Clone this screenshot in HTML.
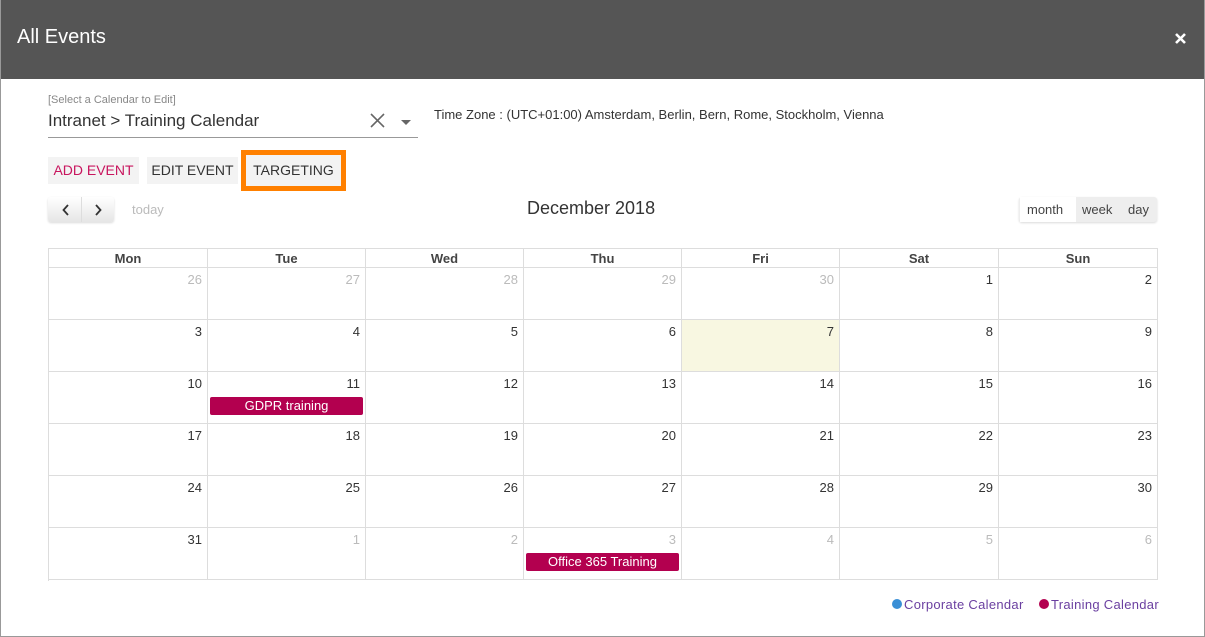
<!DOCTYPE html>
<html><head><style>
*{box-sizing:border-box;margin:0;padding:0}
body{width:1205px;height:637px;background:#fff;font-family:"Liberation Sans",sans-serif;position:relative;overflow:hidden;color:#333}
.frame{position:absolute;left:0;top:0;width:1205px;height:637px;border:1px solid #999;border-top:none}
.hdr{position:absolute;left:0;top:0;width:1205px;height:79px;background:#555}
.hdr .t{position:absolute;left:17px;top:26px;color:#fff;font-size:20px}
.a{position:absolute;white-space:nowrap}
.btn{position:absolute;top:157px;height:27px;background:#f3f3f3;font-size:14px;line-height:27px;text-align:center}
.cell{position:absolute;border-right:1px solid #ddd;border-bottom:1px solid #ddd;font-size:13px;text-align:right;padding:4px 5px 0 0;color:#333}
.dh{position:absolute;top:248px;height:20px;border-right:1px solid #ddd;border-top:1px solid #ddd;border-bottom:1px solid #ddd;font-size:13px;font-weight:bold;text-align:center;line-height:19px;color:#444}
.ev{position:absolute;height:18px;background:#b3004f;color:#fff;font-size:13px;text-align:center;line-height:18px;border-radius:2px}
</style></head><body>
<div class="hdr"><div class="t">All Events</div>
<svg class="a" style="left:1174px;top:32px" width="13" height="13" viewBox="0 0 13 13"><path d="M2 2L11 11M11 2L2 11" stroke="#fff" stroke-width="2.6"/></svg></div>
<div class="frame"></div>
<div class="a" style="left:48px;top:94px;font-size:11px;color:#888">[Select a Calendar to Edit]</div>
<div class="a" style="left:48px;top:111px;font-size:17px;color:#333">Intranet &gt; Training Calendar</div>
<svg class="a" style="left:370px;top:113px" width="15" height="15" viewBox="0 0 15 15"><path d="M1 1L14 14M14 1L1 14" stroke="#666" stroke-width="1.6"/></svg>
<div class="a" style="left:401px;top:120px;width:0;height:0;border-left:5px solid transparent;border-right:5px solid transparent;border-top:5px solid #666"></div>
<div class="a" style="left:48px;top:137px;width:370px;height:1px;background:#999"></div>
<div class="a" style="left:434px;top:107px;font-size:13px;color:#333">Time Zone : (UTC+01:00) Amsterdam, Berlin, Bern, Rome, Stockholm, Vienna</div>
<div class="btn" style="left:48px;width:91px;color:#c8155e">ADD EVENT</div>
<div class="btn" style="left:147px;width:91px">EDIT EVENT</div>
<div class="btn" style="left:241px;top:150px;width:105px;height:41px;border:5px solid #ff8000;background:#f3f3f3;line-height:31px">TARGETING</div>
<div class="a" style="left:48px;top:197px;width:66px;height:25px;background:linear-gradient(#fff,#e6e6e6);border-radius:3px;box-shadow:0 1px 2px rgba(0,0,0,.15)"></div>
<div class="a" style="left:81px;top:197px;width:1px;height:25px;background:#ddd"></div>
<svg class="a" style="left:62px;top:204px" width="8" height="12" viewBox="0 0 8 12"><path d="M6 1L1.5 6L6 11" fill="none" stroke="#333" stroke-width="1.8"/></svg>
<svg class="a" style="left:94px;top:204px" width="8" height="12" viewBox="0 0 8 12"><path d="M2 1L6.5 6L2 11" fill="none" stroke="#333" stroke-width="1.8"/></svg>
<div class="a" style="left:132px;top:202px;font-size:13px;color:#bbb">today</div>
<div class="a" style="left:527px;top:198px;font-size:18px;color:#333">December 2018</div>
<div class="a" style="left:1019px;top:197px;width:138px;height:25px;background:#eee;border-radius:3px;box-shadow:0 1px 2px rgba(0,0,0,.15)"></div>
<div class="a" style="left:1020px;top:197px;width:56px;height:25px;background:#fff"></div>
<div class="a" style="left:1027px;top:202px;font-size:13px;color:#444">month</div>
<div class="a" style="left:1082px;top:202px;font-size:13px;color:#444">week</div>
<div class="a" style="left:1128px;top:202px;font-size:13px;color:#444">day</div>
<div class="a" style="left:48px;top:248px;width:1px;height:333px;background:#ddd"></div>
<div id="g"></div>
<script>
var xs=[48,207,365,523,681,839,998,1157],days=["Mon","Tue","Wed","Thu","Fri","Sat","Sun"],h="";
for(var i=0;i<7;i++)h+='<div class="dh" style="left:'+(xs[i]+1)+'px;width:'+(xs[i+1]-xs[i])+'px">'+days[i]+'</div>';
for(var r=0;r<6;r++)for(var c=0;c<7;c++){var k=r*7+c;var num,g;
if(k<5){num=26+k;g=1}else if(k<36){num=k-4;g=0}else{num=k-35;g=1}
var y=268+r*52;var bg=(num==7&&!g)?'background:#f8f7e1;':'';
h+='<div class="cell" style="'+bg+'left:'+(xs[c]+1)+'px;top:'+y+'px;width:'+(xs[c+1]-xs[c])+'px;height:52px"><span'+(g?' style="color:#bbb"':'')+'>'+num+'</span></div>';}
document.getElementById('g').innerHTML=h;
</script>
<div class="ev" style="left:210px;top:397px;width:153px">GDPR training</div>
<div class="ev" style="left:526px;top:553px;width:153px">Office 365 Training</div>
<div class="a" style="left:892px;top:599px;width:10px;height:10px;border-radius:50%;background:#3a8fd6"></div>
<div class="a" style="left:904px;top:597px;font-size:13px;color:#6a3fa0;letter-spacing:0.3px">Corporate Calendar</div>
<div class="a" style="left:1039px;top:599px;width:10px;height:10px;border-radius:50%;background:#b3004f"></div>
<div class="a" style="left:1051px;top:597px;font-size:13px;color:#6a3fa0;letter-spacing:0.3px">Training Calendar</div>
</body></html>
